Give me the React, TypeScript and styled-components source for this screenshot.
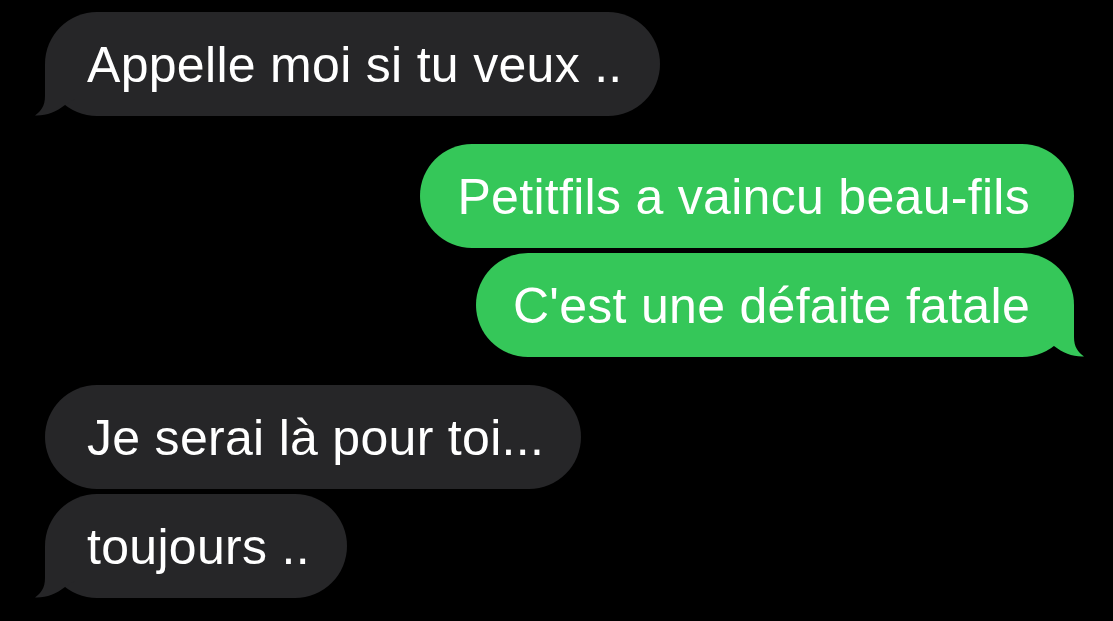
import styled, { createGlobalStyle } from "styled-components";

type Side = "me" | "them";

const GlobalStyle = createGlobalStyle`
  html, body {
    margin: 0;
    padding: 0;
    background: #000;
  }
  body {
    font-family: "Liberation Sans", Arial, sans-serif;
    -webkit-font-smoothing: antialiased;
  }
`;

const Thread = styled.div`
  width: 1113px;
  height: 621px;
  box-sizing: border-box;
  padding: 12px 39px 0 45px;
  display: flex;
  flex-direction: column;
  gap: 28px;
  background: #000;
  overflow: hidden;
`;

const Group = styled.div<{ $side: Side }>`
  display: flex;
  flex-direction: column;
  gap: 5px;
  align-items: ${(p) => (p.$side === "me" ? "flex-end" : "flex-start")};
`;

const Bubble = styled.div<{ $side: Side; $tail: boolean }>`
  position: relative;
  box-sizing: border-box;
  height: 104px;
  padding: ${(p) => (p.$side === "me" ? "23px 44px 21px 37px" : "23px 37px 21px 42px")};
  border-radius: 52px;
  background: ${(p) => (p.$side === "me" ? "#35c759" : "#262628")};
  color: #fff;
  font-size: 50px;
  line-height: 60px;
  letter-spacing: 0.3px;
  white-space: nowrap;

  svg {
    position: absolute;
    bottom: 0;
    ${(p) => (p.$side === "me" ? "right: -10px; transform: scaleX(-1);" : "left: -10px;")}
    display: ${(p) => (p.$tail ? "block" : "none")};
  }
`;

const Tail = ({ color }: { color: string }) => (
  <svg width="42" height="52" viewBox="0 0 42 52">
    <path
      d="M10 0 L10 32 C10 42 6 47 0 51.5 C11 52 21 48 30 41 L42 34 L42 0 Z"
      fill={color}
    />
  </svg>
);

const Message = ({
  side,
  tail = false,
  children,
}: {
  side: Side;
  tail?: boolean;
  children: string;
}) => (
  <Bubble $side={side} $tail={tail}>
    {children}
    <Tail color={side === "me" ? "#35c759" : "#262628"} />
  </Bubble>
);

const App = () => {
  return (
    <>
      <GlobalStyle />
      <Thread>
        <Group $side="them">
          <Message side="them" tail>
            Appelle moi si tu veux ..
          </Message>
        </Group>
        <Group $side="me">
          <Message side="me">Petitfils a vaincu beau-fils</Message>
          <Message side="me" tail>
            C'est une défaite fatale
          </Message>
        </Group>
        <Group $side="them">
          <Message side="them">Je serai là pour toi...</Message>
          <Message side="them" tail>
            toujours ..
          </Message>
        </Group>
      </Thread>
    </>
  );
};

export default App;
